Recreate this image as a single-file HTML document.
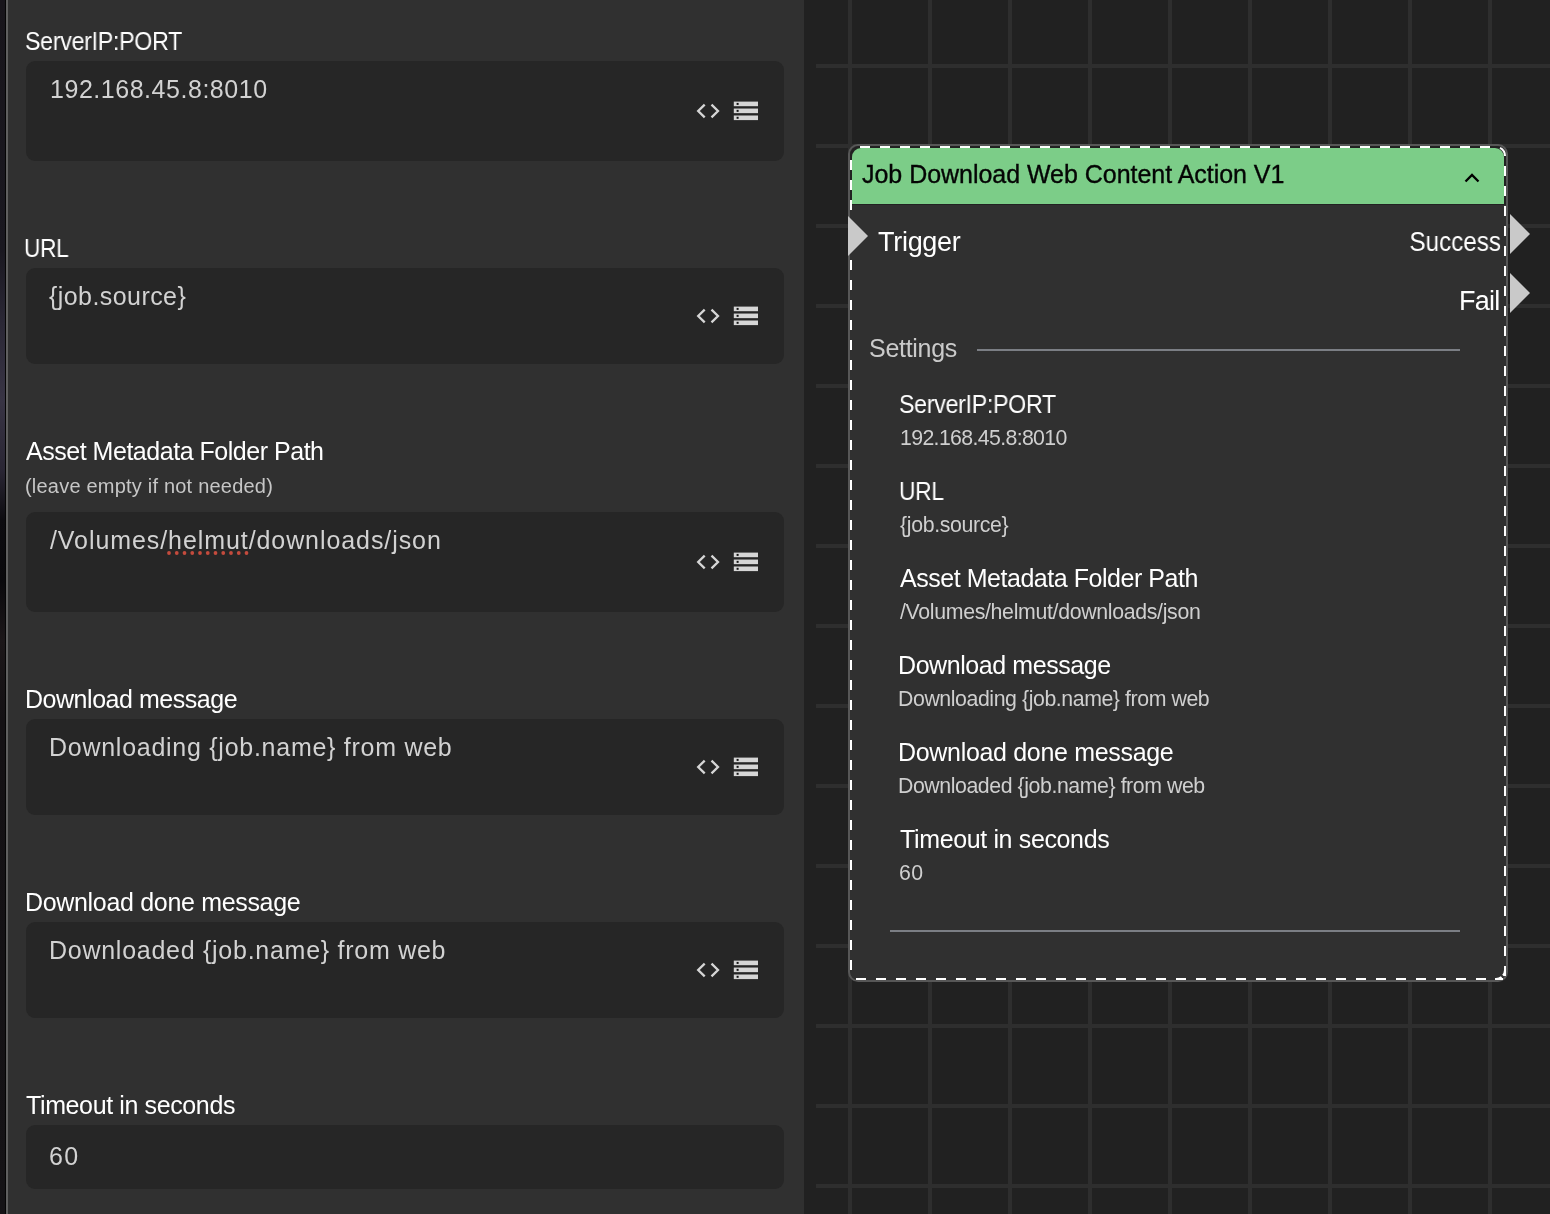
<!DOCTYPE html><html><head><meta charset="utf-8"><style>
html,body{margin:0;padding:0;}
body{width:1550px;height:1214px;position:relative;overflow:hidden;background:#212121;font-family:"Liberation Sans",sans-serif;}
.t{position:absolute;white-space:nowrap;will-change:transform;}
.abs{position:absolute;}
.box{position:absolute;left:26px;width:758px;background:#262626;border-radius:9px;}
.hl{position:absolute;left:816px;right:0;height:4px;background:#2e2e2e;}
.vl{position:absolute;top:0;bottom:0;width:4px;background:#2e2e2e;}
.ico{position:absolute;}
</style></head><body>
<div class="abs" style="left:0;top:0;width:5px;height:1214px;background:linear-gradient(to bottom,#18151b 0px,#1a1820 250px,#2a2735 320px,#383444 400px,#2a2634 470px,#0d0c10 520px,#0a090c 580px,#1c1719 640px,#141114 720px,#151316 1214px)"></div>
<div class="abs" style="left:5px;top:0;width:1px;height:1214px;background:#050505"></div>
<div class="abs" style="left:6px;top:0;width:2px;height:1214px;background:#5f5f5f"></div>
<div class="abs" style="left:8px;top:0;width:796px;height:1214px;background:#303030"></div>
<div class="hl" style="top:64px"></div>
<div class="hl" style="top:144px"></div>
<div class="hl" style="top:224px"></div>
<div class="hl" style="top:304px"></div>
<div class="hl" style="top:384px"></div>
<div class="hl" style="top:464px"></div>
<div class="hl" style="top:544px"></div>
<div class="hl" style="top:624px"></div>
<div class="hl" style="top:704px"></div>
<div class="hl" style="top:784px"></div>
<div class="hl" style="top:864px"></div>
<div class="hl" style="top:944px"></div>
<div class="hl" style="top:1024px"></div>
<div class="hl" style="top:1104px"></div>
<div class="hl" style="top:1184px"></div>
<div class="vl" style="left:848px"></div>
<div class="vl" style="left:928px"></div>
<div class="vl" style="left:1008px"></div>
<div class="vl" style="left:1088px"></div>
<div class="vl" style="left:1168px"></div>
<div class="vl" style="left:1248px"></div>
<div class="vl" style="left:1328px"></div>
<div class="vl" style="left:1408px"></div>
<div class="vl" style="left:1488px"></div>
<div class="t" id="L0" style="left:25.27px;top:29.34px;font-size:25px;line-height:25px;color:#ffffff;letter-spacing:-0.300px;transform:scaleX(0.9276);transform-origin:left center;">ServerIP:PORT</div>
<div class="box" style="top:61px;height:100px"></div>
<div class="t" id="V0" style="left:50.00px;top:77.24px;font-size:25px;line-height:25px;color:#d2d2d2;letter-spacing:0.535px;">192.168.45.8:8010</div>
<svg class="ico" style="left:694px;top:102.0px" width="28" height="18" viewBox="0 0 28 18"><path d="M10.7 2.6 L4.2 9 L10.7 15.4 M17.5 2.6 L24 9 L17.5 15.4" fill="none" stroke="#d6d6d6" stroke-width="2.3" stroke-linecap="butt" stroke-linejoin="miter"/></svg><svg class="ico" style="left:733px;top:101.0px" width="26" height="20" viewBox="0 0 26 20"><rect x="0.8" y="0.60" width="24.2" height="4.6" fill="#d6d6d6"/><rect x="3.6" y="1.90" width="2" height="2" fill="#111"/><rect x="0.8" y="7.55" width="24.2" height="4.6" fill="#d6d6d6"/><rect x="3.6" y="8.85" width="2" height="2" fill="#111"/><rect x="0.8" y="14.50" width="24.2" height="4.6" fill="#d6d6d6"/><rect x="3.6" y="15.80" width="2" height="2" fill="#111"/></svg>
<div class="t" id="L1" style="left:24.35px;top:236.14px;font-size:25px;line-height:25px;color:#ffffff;letter-spacing:-0.300px;transform:scaleX(0.9059);transform-origin:left center;">URL</div>
<div class="box" style="top:268px;height:96px"></div>
<div class="t" id="V1" style="left:49.33px;top:283.94px;font-size:25px;line-height:25px;color:#d2d2d2;letter-spacing:0.431px;">{job.source}</div>
<svg class="ico" style="left:694px;top:307.0px" width="28" height="18" viewBox="0 0 28 18"><path d="M10.7 2.6 L4.2 9 L10.7 15.4 M17.5 2.6 L24 9 L17.5 15.4" fill="none" stroke="#d6d6d6" stroke-width="2.3" stroke-linecap="butt" stroke-linejoin="miter"/></svg><svg class="ico" style="left:733px;top:306.0px" width="26" height="20" viewBox="0 0 26 20"><rect x="0.8" y="0.60" width="24.2" height="4.6" fill="#d6d6d6"/><rect x="3.6" y="1.90" width="2" height="2" fill="#111"/><rect x="0.8" y="7.55" width="24.2" height="4.6" fill="#d6d6d6"/><rect x="3.6" y="8.85" width="2" height="2" fill="#111"/><rect x="0.8" y="14.50" width="24.2" height="4.6" fill="#d6d6d6"/><rect x="3.6" y="15.80" width="2" height="2" fill="#111"/></svg>
<div class="t" id="L2" style="left:26.13px;top:439.24px;font-size:25px;line-height:25px;color:#ffffff;letter-spacing:-0.475px;">Asset Metadata Folder Path</div>
<div class="t" id="Lsub" style="left:24.65px;top:475.97px;font-size:20px;line-height:20px;color:#c6c6c6;letter-spacing:0.209px;">(leave empty if not needed)</div>
<div class="box" style="top:512px;height:100px"></div>
<div class="t" id="V2" style="left:49.81px;top:528.24px;font-size:25px;line-height:25px;color:#d2d2d2;letter-spacing:0.921px;">/Volumes/helmut/downloads/json</div>
<svg class="ico" style="left:694px;top:553.0px" width="28" height="18" viewBox="0 0 28 18"><path d="M10.7 2.6 L4.2 9 L10.7 15.4 M17.5 2.6 L24 9 L17.5 15.4" fill="none" stroke="#d6d6d6" stroke-width="2.3" stroke-linecap="butt" stroke-linejoin="miter"/></svg><svg class="ico" style="left:733px;top:552.0px" width="26" height="20" viewBox="0 0 26 20"><rect x="0.8" y="0.60" width="24.2" height="4.6" fill="#d6d6d6"/><rect x="3.6" y="1.90" width="2" height="2" fill="#111"/><rect x="0.8" y="7.55" width="24.2" height="4.6" fill="#d6d6d6"/><rect x="3.6" y="8.85" width="2" height="2" fill="#111"/><rect x="0.8" y="14.50" width="24.2" height="4.6" fill="#d6d6d6"/><rect x="3.6" y="15.80" width="2" height="2" fill="#111"/></svg>
<div class="t" id="L3" style="left:24.75px;top:687.34px;font-size:25px;line-height:25px;color:#ffffff;letter-spacing:-0.463px;">Download message</div>
<div class="box" style="top:719px;height:96px"></div>
<div class="t" id="V3" style="left:49.38px;top:735.24px;font-size:25px;line-height:25px;color:#d2d2d2;letter-spacing:0.733px;">Downloading {job.name} from web</div>
<svg class="ico" style="left:694px;top:758.0px" width="28" height="18" viewBox="0 0 28 18"><path d="M10.7 2.6 L4.2 9 L10.7 15.4 M17.5 2.6 L24 9 L17.5 15.4" fill="none" stroke="#d6d6d6" stroke-width="2.3" stroke-linecap="butt" stroke-linejoin="miter"/></svg><svg class="ico" style="left:733px;top:757.0px" width="26" height="20" viewBox="0 0 26 20"><rect x="0.8" y="0.60" width="24.2" height="4.6" fill="#d6d6d6"/><rect x="3.6" y="1.90" width="2" height="2" fill="#111"/><rect x="0.8" y="7.55" width="24.2" height="4.6" fill="#d6d6d6"/><rect x="3.6" y="8.85" width="2" height="2" fill="#111"/><rect x="0.8" y="14.50" width="24.2" height="4.6" fill="#d6d6d6"/><rect x="3.6" y="15.80" width="2" height="2" fill="#111"/></svg>
<div class="t" id="L4" style="left:24.75px;top:890.04px;font-size:25px;line-height:25px;color:#ffffff;letter-spacing:-0.323px;">Download done message</div>
<div class="box" style="top:922px;height:96px"></div>
<div class="t" id="V4" style="left:48.64px;top:938.24px;font-size:25px;line-height:25px;color:#d2d2d2;letter-spacing:0.732px;">Downloaded {job.name} from web</div>
<svg class="ico" style="left:694px;top:961.0px" width="28" height="18" viewBox="0 0 28 18"><path d="M10.7 2.6 L4.2 9 L10.7 15.4 M17.5 2.6 L24 9 L17.5 15.4" fill="none" stroke="#d6d6d6" stroke-width="2.3" stroke-linecap="butt" stroke-linejoin="miter"/></svg><svg class="ico" style="left:733px;top:960.0px" width="26" height="20" viewBox="0 0 26 20"><rect x="0.8" y="0.60" width="24.2" height="4.6" fill="#d6d6d6"/><rect x="3.6" y="1.90" width="2" height="2" fill="#111"/><rect x="0.8" y="7.55" width="24.2" height="4.6" fill="#d6d6d6"/><rect x="3.6" y="8.85" width="2" height="2" fill="#111"/><rect x="0.8" y="14.50" width="24.2" height="4.6" fill="#d6d6d6"/><rect x="3.6" y="15.80" width="2" height="2" fill="#111"/></svg>
<div class="t" id="L5" style="left:26.02px;top:1093.34px;font-size:25px;line-height:25px;color:#ffffff;letter-spacing:-0.378px;">Timeout in seconds</div>
<div class="box" style="top:1125px;height:64px"></div>
<div class="t" id="V5" style="left:49.48px;top:1144.44px;font-size:25px;line-height:25px;color:#d2d2d2;letter-spacing:1.239px;">60</div>
<svg class="abs" style="left:167px;top:551px" width="84" height="4"><circle cx="2.00" cy="2" r="1.9" fill="#c44b3d"/><circle cx="9.75" cy="2" r="1.9" fill="#c44b3d"/><circle cx="17.50" cy="2" r="1.9" fill="#c44b3d"/><circle cx="25.25" cy="2" r="1.9" fill="#c44b3d"/><circle cx="33.00" cy="2" r="1.9" fill="#c44b3d"/><circle cx="40.75" cy="2" r="1.9" fill="#c44b3d"/><circle cx="48.50" cy="2" r="1.9" fill="#c44b3d"/><circle cx="56.25" cy="2" r="1.9" fill="#c44b3d"/><circle cx="64.00" cy="2" r="1.9" fill="#c44b3d"/><circle cx="71.75" cy="2" r="1.9" fill="#c44b3d"/><circle cx="79.50" cy="2" r="1.9" fill="#c44b3d"/></svg>
<div class="abs" style="left:848px;top:144px;width:656px;height:834px;border:2px solid #575757;border-radius:10px;background:#303030"></div>
<div class="abs" style="left:850px;top:146px;width:656px;height:59px;background:#222222;border-radius:9px 9px 0 0"></div>
<div class="abs" style="left:852px;top:148px;width:652px;height:56px;background:#7ccd88;border-radius:9px 9px 0 0"></div>
<svg class="abs" style="left:848px;top:144px" width="660" height="838"><rect x="12" y="2" width="10" height="2" fill="#fff"/><rect x="32" y="2" width="10" height="2" fill="#fff"/><rect x="52" y="2" width="10" height="2" fill="#fff"/><rect x="72" y="2" width="10" height="2" fill="#fff"/><rect x="92" y="2" width="10" height="2" fill="#fff"/><rect x="112" y="2" width="10" height="2" fill="#fff"/><rect x="132" y="2" width="10" height="2" fill="#fff"/><rect x="152" y="2" width="10" height="2" fill="#fff"/><rect x="172" y="2" width="10" height="2" fill="#fff"/><rect x="192" y="2" width="10" height="2" fill="#fff"/><rect x="212" y="2" width="10" height="2" fill="#fff"/><rect x="232" y="2" width="10" height="2" fill="#fff"/><rect x="252" y="2" width="10" height="2" fill="#fff"/><rect x="272" y="2" width="10" height="2" fill="#fff"/><rect x="292" y="2" width="10" height="2" fill="#fff"/><rect x="312" y="2" width="10" height="2" fill="#fff"/><rect x="332" y="2" width="10" height="2" fill="#fff"/><rect x="352" y="2" width="10" height="2" fill="#fff"/><rect x="372" y="2" width="10" height="2" fill="#fff"/><rect x="392" y="2" width="10" height="2" fill="#fff"/><rect x="412" y="2" width="10" height="2" fill="#fff"/><rect x="432" y="2" width="10" height="2" fill="#fff"/><rect x="452" y="2" width="10" height="2" fill="#fff"/><rect x="472" y="2" width="10" height="2" fill="#fff"/><rect x="492" y="2" width="10" height="2" fill="#fff"/><rect x="512" y="2" width="10" height="2" fill="#fff"/><rect x="532" y="2" width="10" height="2" fill="#fff"/><rect x="552" y="2" width="10" height="2" fill="#fff"/><rect x="572" y="2" width="10" height="2" fill="#fff"/><rect x="592" y="2" width="10" height="2" fill="#fff"/><rect x="612" y="2" width="10" height="2" fill="#fff"/><rect x="632" y="2" width="10" height="2" fill="#fff"/><rect x="8" y="834" width="10" height="2" fill="#fff"/><rect x="28" y="834" width="10" height="2" fill="#fff"/><rect x="48" y="834" width="10" height="2" fill="#fff"/><rect x="68" y="834" width="10" height="2" fill="#fff"/><rect x="88" y="834" width="10" height="2" fill="#fff"/><rect x="108" y="834" width="10" height="2" fill="#fff"/><rect x="128" y="834" width="10" height="2" fill="#fff"/><rect x="148" y="834" width="10" height="2" fill="#fff"/><rect x="168" y="834" width="10" height="2" fill="#fff"/><rect x="188" y="834" width="10" height="2" fill="#fff"/><rect x="208" y="834" width="10" height="2" fill="#fff"/><rect x="228" y="834" width="10" height="2" fill="#fff"/><rect x="248" y="834" width="10" height="2" fill="#fff"/><rect x="268" y="834" width="10" height="2" fill="#fff"/><rect x="288" y="834" width="10" height="2" fill="#fff"/><rect x="308" y="834" width="10" height="2" fill="#fff"/><rect x="328" y="834" width="10" height="2" fill="#fff"/><rect x="348" y="834" width="10" height="2" fill="#fff"/><rect x="368" y="834" width="10" height="2" fill="#fff"/><rect x="388" y="834" width="10" height="2" fill="#fff"/><rect x="408" y="834" width="10" height="2" fill="#fff"/><rect x="428" y="834" width="10" height="2" fill="#fff"/><rect x="448" y="834" width="10" height="2" fill="#fff"/><rect x="468" y="834" width="10" height="2" fill="#fff"/><rect x="488" y="834" width="10" height="2" fill="#fff"/><rect x="508" y="834" width="10" height="2" fill="#fff"/><rect x="528" y="834" width="10" height="2" fill="#fff"/><rect x="548" y="834" width="10" height="2" fill="#fff"/><rect x="568" y="834" width="10" height="2" fill="#fff"/><rect x="588" y="834" width="10" height="2" fill="#fff"/><rect x="608" y="834" width="10" height="2" fill="#fff"/><rect x="628" y="834" width="10" height="2" fill="#fff"/><rect x="648" y="834" width="7" height="2" fill="#fff"/><rect x="2" y="16" width="2" height="10" fill="#fff"/><rect x="2" y="36" width="2" height="10" fill="#fff"/><rect x="2" y="56" width="2" height="10" fill="#fff"/><rect x="2" y="76" width="2" height="10" fill="#fff"/><rect x="2" y="96" width="2" height="10" fill="#fff"/><rect x="2" y="116" width="2" height="10" fill="#fff"/><rect x="2" y="136" width="2" height="10" fill="#fff"/><rect x="2" y="156" width="2" height="10" fill="#fff"/><rect x="2" y="176" width="2" height="10" fill="#fff"/><rect x="2" y="196" width="2" height="10" fill="#fff"/><rect x="2" y="216" width="2" height="10" fill="#fff"/><rect x="2" y="236" width="2" height="10" fill="#fff"/><rect x="2" y="256" width="2" height="10" fill="#fff"/><rect x="2" y="276" width="2" height="10" fill="#fff"/><rect x="2" y="296" width="2" height="10" fill="#fff"/><rect x="2" y="316" width="2" height="10" fill="#fff"/><rect x="2" y="336" width="2" height="10" fill="#fff"/><rect x="2" y="356" width="2" height="10" fill="#fff"/><rect x="2" y="376" width="2" height="10" fill="#fff"/><rect x="2" y="396" width="2" height="10" fill="#fff"/><rect x="2" y="416" width="2" height="10" fill="#fff"/><rect x="2" y="436" width="2" height="10" fill="#fff"/><rect x="2" y="456" width="2" height="10" fill="#fff"/><rect x="2" y="476" width="2" height="10" fill="#fff"/><rect x="2" y="496" width="2" height="10" fill="#fff"/><rect x="2" y="516" width="2" height="10" fill="#fff"/><rect x="2" y="536" width="2" height="10" fill="#fff"/><rect x="2" y="556" width="2" height="10" fill="#fff"/><rect x="2" y="576" width="2" height="10" fill="#fff"/><rect x="2" y="596" width="2" height="10" fill="#fff"/><rect x="2" y="616" width="2" height="10" fill="#fff"/><rect x="2" y="636" width="2" height="10" fill="#fff"/><rect x="2" y="656" width="2" height="10" fill="#fff"/><rect x="2" y="676" width="2" height="10" fill="#fff"/><rect x="2" y="696" width="2" height="10" fill="#fff"/><rect x="2" y="716" width="2" height="10" fill="#fff"/><rect x="2" y="736" width="2" height="10" fill="#fff"/><rect x="2" y="756" width="2" height="10" fill="#fff"/><rect x="2" y="776" width="2" height="10" fill="#fff"/><rect x="2" y="796" width="2" height="10" fill="#fff"/><rect x="2" y="816" width="2" height="10" fill="#fff"/><rect x="656" y="22" width="2" height="10" fill="#fff"/><rect x="656" y="42" width="2" height="10" fill="#fff"/><rect x="656" y="62" width="2" height="10" fill="#fff"/><rect x="656" y="82" width="2" height="10" fill="#fff"/><rect x="656" y="102" width="2" height="10" fill="#fff"/><rect x="656" y="122" width="2" height="10" fill="#fff"/><rect x="656" y="142" width="2" height="10" fill="#fff"/><rect x="656" y="162" width="2" height="10" fill="#fff"/><rect x="656" y="182" width="2" height="10" fill="#fff"/><rect x="656" y="202" width="2" height="10" fill="#fff"/><rect x="656" y="222" width="2" height="10" fill="#fff"/><rect x="656" y="242" width="2" height="10" fill="#fff"/><rect x="656" y="262" width="2" height="10" fill="#fff"/><rect x="656" y="282" width="2" height="10" fill="#fff"/><rect x="656" y="302" width="2" height="10" fill="#fff"/><rect x="656" y="322" width="2" height="10" fill="#fff"/><rect x="656" y="342" width="2" height="10" fill="#fff"/><rect x="656" y="362" width="2" height="10" fill="#fff"/><rect x="656" y="382" width="2" height="10" fill="#fff"/><rect x="656" y="402" width="2" height="10" fill="#fff"/><rect x="656" y="422" width="2" height="10" fill="#fff"/><rect x="656" y="442" width="2" height="10" fill="#fff"/><rect x="656" y="462" width="2" height="10" fill="#fff"/><rect x="656" y="482" width="2" height="10" fill="#fff"/><rect x="656" y="502" width="2" height="10" fill="#fff"/><rect x="656" y="522" width="2" height="10" fill="#fff"/><rect x="656" y="542" width="2" height="10" fill="#fff"/><rect x="656" y="562" width="2" height="10" fill="#fff"/><rect x="656" y="582" width="2" height="10" fill="#fff"/><rect x="656" y="602" width="2" height="10" fill="#fff"/><rect x="656" y="622" width="2" height="10" fill="#fff"/><rect x="656" y="642" width="2" height="10" fill="#fff"/><rect x="656" y="662" width="2" height="10" fill="#fff"/><rect x="656" y="682" width="2" height="10" fill="#fff"/><rect x="656" y="702" width="2" height="10" fill="#fff"/><rect x="656" y="722" width="2" height="10" fill="#fff"/><rect x="656" y="742" width="2" height="10" fill="#fff"/><rect x="656" y="762" width="2" height="10" fill="#fff"/><rect x="656" y="782" width="2" height="10" fill="#fff"/><rect x="656" y="802" width="2" height="10" fill="#fff"/><rect x="656" y="822" width="2" height="10" fill="#fff"/><path d="M652 3.9 A9 9 0 0 1 657 12 M657 822 L657 826 A9 9 0 0 1 655 831.5 M647 835 L648 835 A9 9 0 0 0 653.5 833" fill="none" stroke="#fff" stroke-width="2"/></svg>
<div class="t" id="Ntitle" style="left:861.96px;top:162.34px;font-size:25px;line-height:25px;color:#050505;letter-spacing:-0.031px;-webkit-text-stroke:0.35px #050505;">Job Download Web Content Action V1</div>
<svg class="abs" style="left:1463px;top:172px" width="18" height="12" viewBox="0 0 18 12"><path d="M2.5 9.5 L9 3 L15.5 9.5" fill="none" stroke="#000" stroke-width="2.3"/></svg>
<svg class="abs" style="left:848px;top:216px" width="20" height="40"><path d="M0 0 L20 20 L0 40 Z" fill="#c9c9c9"/></svg>
<svg class="abs" style="left:1510px;top:214px" width="20" height="40"><path d="M0 0 L20 20 L0 40 Z" fill="#c9c9c9"/></svg>
<svg class="abs" style="left:1510px;top:273px" width="20" height="40"><path d="M0 0 L20 20 L0 40 Z" fill="#c9c9c9"/></svg>
<div class="t" id="Ntrig" style="left:877.65px;top:229.04px;font-size:27px;line-height:27px;color:#ffffff;letter-spacing:-0.282px;">Trigger</div>
<div class="t" id="Nsucc" style="right:49.31px;top:229.04px;font-size:27px;line-height:27px;color:#ffffff;letter-spacing:0.000px;transform:scaleX(0.8977);transform-origin:right center;">Success</div>
<div class="t" id="Nfail" style="right:50.83px;top:287.74px;font-size:27px;line-height:27px;color:#ffffff;letter-spacing:-0.786px;">Fail</div>
<div class="t" id="Nset" style="left:868.95px;top:336.34px;font-size:25px;line-height:25px;color:#cacaca;letter-spacing:-0.286px;">Settings</div>
<div class="abs" style="left:977px;top:349px;width:483px;height:2px;background:#7b7e84"></div>
<div class="abs" style="left:890px;top:930px;width:570px;height:2px;background:#7b7e84"></div>
<div class="t" id="NL0" style="left:899.37px;top:392.04px;font-size:25px;line-height:25px;color:#ffffff;letter-spacing:-0.300px;transform:scaleX(0.9269);transform-origin:left center;">ServerIP:PORT</div>
<div class="t" id="NV0" style="left:899.61px;top:428.07px;font-size:21.3px;line-height:21.3px;color:#cfcfcf;letter-spacing:-0.642px;">192.168.45.8:8010</div>
<div class="t" id="NL1" style="left:898.52px;top:479.04px;font-size:25px;line-height:25px;color:#ffffff;letter-spacing:-0.300px;transform:scaleX(0.9105);transform-origin:left center;">URL</div>
<div class="t" id="NV1" style="left:900.00px;top:515.07px;font-size:21.3px;line-height:21.3px;color:#cfcfcf;letter-spacing:-0.350px;">{job.source}</div>
<div class="t" id="NL2" style="left:899.80px;top:566.04px;font-size:25px;line-height:25px;color:#ffffff;letter-spacing:-0.462px;">Asset Metadata Folder Path</div>
<div class="t" id="NV2" style="left:899.88px;top:602.07px;font-size:21.3px;line-height:21.3px;color:#cfcfcf;letter-spacing:-0.325px;">/Volumes/helmut/downloads/json</div>
<div class="t" id="NL3" style="left:897.70px;top:653.04px;font-size:25px;line-height:25px;color:#ffffff;letter-spacing:-0.427px;">Download message</div>
<div class="t" id="NV3" style="left:898.08px;top:689.07px;font-size:21.3px;line-height:21.3px;color:#cfcfcf;letter-spacing:-0.424px;">Downloading {job.name} from web</div>
<div class="t" id="NL4" style="left:897.70px;top:740.04px;font-size:25px;line-height:25px;color:#ffffff;letter-spacing:-0.318px;">Download done message</div>
<div class="t" id="NV4" style="left:898.08px;top:776.07px;font-size:21.3px;line-height:21.3px;color:#cfcfcf;letter-spacing:-0.429px;">Downloaded {job.name} from web</div>
<div class="t" id="NL5" style="left:899.67px;top:827.04px;font-size:25px;line-height:25px;color:#ffffff;letter-spacing:-0.362px;">Timeout in seconds</div>
<div class="t" id="NV5" style="left:898.88px;top:863.07px;font-size:21.3px;line-height:21.3px;color:#cfcfcf;letter-spacing:0.294px;">60</div>
</body></html>
